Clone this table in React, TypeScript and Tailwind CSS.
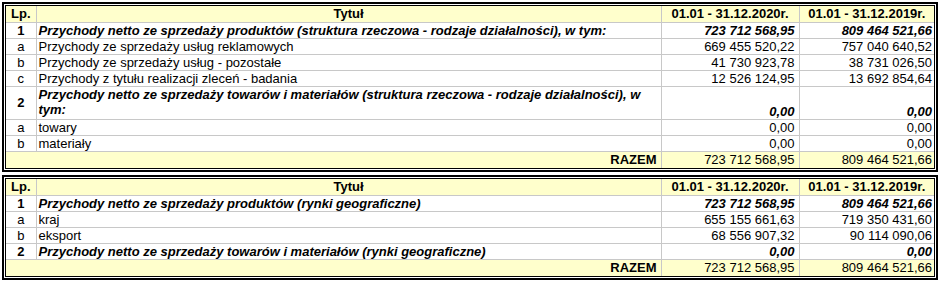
import React from 'react';

type Row = {
  lp: string;
  title: React.ReactNode;
  y2020: string;
  y2019: string;
  strong?: boolean;
  tall?: boolean;
};

const table1: Row[] = [
  {
    lp: '1',
    title: 'Przychody netto ze sprzedaży produktów (struktura rzeczowa - rodzaje działalności), w tym:',
    y2020: '723 712 568,95',
    y2019: '809 464 521,66',
    strong: true,
  },
  { lp: 'a', title: 'Przychody ze sprzedaży usług reklamowych', y2020: '669 455 520,22', y2019: '757 040 640,52' },
  { lp: 'b', title: 'Przychody ze sprzedaży usług - pozostałe', y2020: '41 730 923,78', y2019: '38 731 026,50' },
  { lp: 'c', title: 'Przychody z tytułu realizacji zleceń - badania', y2020: '12 526 124,95', y2019: '13 692 854,64' },
  {
    lp: '2',
    title: (
      <>
        Przychody netto ze sprzedaży towarów i materiałów (struktura rzeczowa - rodzaje działalności), w
        <br />
        tym:
      </>
    ),
    y2020: '0,00',
    y2019: '0,00',
    strong: true,
    tall: true,
  },
  { lp: 'a', title: 'towary', y2020: '0,00', y2019: '0,00' },
  { lp: 'b', title: 'materiały', y2020: '0,00', y2019: '0,00' },
];

const table2: Row[] = [
  {
    lp: '1',
    title: 'Przychody netto ze sprzedaży produktów (rynki geograficzne)',
    y2020: '723 712 568,95',
    y2019: '809 464 521,66',
    strong: true,
  },
  { lp: 'a', title: 'kraj', y2020: '655 155 661,63', y2019: '719 350 431,60' },
  { lp: 'b', title: 'eksport', y2020: '68 556 907,32', y2019: '90 114 090,06' },
  {
    lp: '2',
    title: 'Przychody netto ze sprzedaży towarów i materiałów (rynki geograficzne)',
    y2020: '0,00',
    y2019: '0,00',
    strong: true,
  },
];

const Table: React.FC<{ rows: Row[]; total2020: string; total2019: string }> = ({ rows, total2020, total2019 }) => (
  <div className="w-[936px] border-2 border-black bg-white p-px">
    <div className="border border-black">
      <table className="w-full table-fixed border-collapse text-[13px] leading-[15px] text-black">
        <colgroup>
          <col className="w-[30px]" />
          <col className="w-[625px]" />
          <col className="w-[138px]" />
          <col />
        </colgroup>
        <thead>
          <tr className="h-[16px] bg-[#ffffcc] font-bold">
            <th className="border-b border-r border-[#c8c8c8] p-0 text-center font-bold">Lp.</th>
            <th className="border-b border-r border-[#c8c8c8] p-0 text-center font-bold">Tytuł</th>
            <th className="border-b border-r border-[#c8c8c8] p-0 text-center font-bold">01.01 - 31.12.2020r.</th>
            <th className="border-b border-[#c8c8c8] p-0 text-center font-bold">01.01 - 31.12.2019r.</th>
          </tr>
        </thead>
        <tbody>
          {rows.map((r, i) => (
            <tr key={i} className={r.tall ? 'h-[33px]' : 'h-[16px]'}>
              <td
                className={`border-b border-r border-[#c8c8c8] p-0 text-center align-middle ${r.strong ? 'font-bold' : ''}`}
              >
                {r.lp}
              </td>
              <td
                className={`border-b border-r border-[#c8c8c8] py-0 pl-[2px] pr-0 text-left align-top whitespace-nowrap ${
                  r.strong ? 'font-bold italic' : ''
                }`}
              >
                {r.title}
              </td>
              <td
                className={`border-b border-r border-[#c8c8c8] py-0 pl-0 pr-[4px] text-right align-bottom ${
                  r.strong ? 'font-bold italic' : ''
                }`}
              >
                {r.y2020}
              </td>
              <td
                className={`border-b border-[#c8c8c8] py-0 pl-0 pr-[2px] text-right align-bottom ${
                  r.strong ? 'font-bold italic' : ''
                }`}
              >
                {r.y2019}
              </td>
            </tr>
          ))}
          <tr className="h-[17px] bg-[#ffffcc]">
            <td className="p-0" />
            <td className="border-r border-[#c8c8c8] py-0 pl-0 pr-[4px] text-right font-bold">RAZEM</td>
            <td className="border-r border-[#c8c8c8] py-0 pl-0 pr-[4px] text-right">{total2020}</td>
            <td className="py-0 pl-0 pr-[2px] text-right">{total2019}</td>
          </tr>
        </tbody>
      </table>
    </div>
  </div>
);

export default function App() {
  return (
    <div className="h-[285px] w-[940px] bg-white pl-[2px] pt-[2px]" style={{ fontFamily: '"Liberation Sans", Arial, sans-serif' }}>
      <Table rows={table1} total2020="723 712 568,95" total2019="809 464 521,66" />
      <div className="mt-[3px]">
        <Table rows={table2} total2020="723 712 568,95" total2019="809 464 521,66" />
      </div>
    </div>
  );
}
